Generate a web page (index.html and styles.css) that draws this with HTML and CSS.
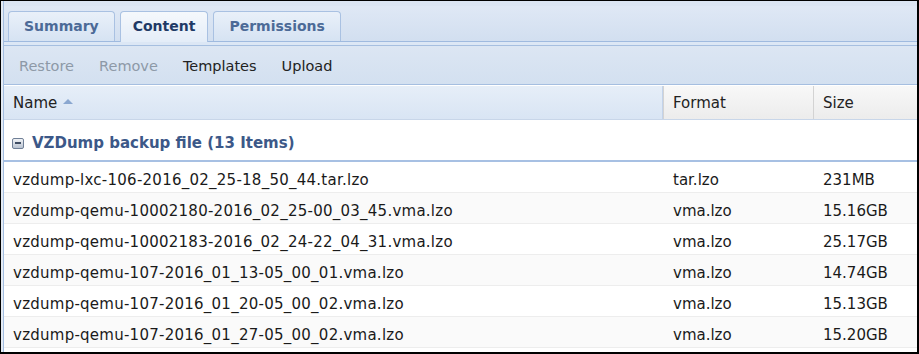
FILE: index.html
```html
<!DOCTYPE html>
<html lang="en">
  <head>
    <meta charset="UTF-8" />
    <title>Storage content</title>
    <link rel="stylesheet" href="styles.css">
  </head>
  <body>
    <div class="frame">
      <div class="panel">
        <div class="tabbar">
          <div class="tab">Summary</div>
          <div class="tab active">Content</div>
          <div class="tab">Permissions</div>
        </div>
        <div class="tabstrip"></div>
        <div class="toolbar">
          <span class="tb-btn disabled">Restore</span>
          <span class="tb-btn disabled">Remove</span>
          <span class="tb-btn">Templates</span>
          <span class="tb-btn">Upload</span>
        </div>
        <div class="grid-head">
          <div class="hcell col-name sorted">Name <span class="sort"></span></div>
          <div class="hcell col-format">Format</div>
          <div class="hcell col-size">Size</div>
        </div>
        <div class="group">
          <span class="collapse"></span>
          VZDump backup file (13 Items)
        </div>
        <div class="rows">
          <div class="row">
            <div class="cell col-name">vzdump-lxc-106-2016_02_25-18_50_44.tar.lzo</div>
            <div class="cell col-format">tar.lzo</div>
            <div class="cell col-size">231MB</div>
          </div>
          <div class="row">
            <div class="cell col-name">vzdump-qemu-10002180-2016_02_25-00_03_45.vma.lzo</div>
            <div class="cell col-format">vma.lzo</div>
            <div class="cell col-size">15.16GB</div>
          </div>
          <div class="row">
            <div class="cell col-name">vzdump-qemu-10002183-2016_02_24-22_04_31.vma.lzo</div>
            <div class="cell col-format">vma.lzo</div>
            <div class="cell col-size">25.17GB</div>
          </div>
          <div class="row">
            <div class="cell col-name">vzdump-qemu-107-2016_01_13-05_00_01.vma.lzo</div>
            <div class="cell col-format">vma.lzo</div>
            <div class="cell col-size">14.74GB</div>
          </div>
          <div class="row">
            <div class="cell col-name">vzdump-qemu-107-2016_01_20-05_00_02.vma.lzo</div>
            <div class="cell col-format">vma.lzo</div>
            <div class="cell col-size">15.13GB</div>
          </div>
          <div class="row">
            <div class="cell col-name">vzdump-qemu-107-2016_01_27-05_00_02.vma.lzo</div>
            <div class="cell col-format">vma.lzo</div>
            <div class="cell col-size">15.20GB</div>
          </div>
        </div>
      </div>
    </div>
  </body>
</html>
```

FILE: styles.css
```css
* {
  margin: 0;
  padding: 0;
  box-sizing: border-box;
}
body {
  background: #fff;
  font-family: "DejaVu Sans", Verdana, sans-serif;
  font-size: 15px;
  color: #1a1a1a;
}
.frame {
  width: 919px;
  height: 354px;
  border: 1px solid #000;
  border-right-width: 2px;
  border-bottom-width: 2px;
  overflow: hidden;
  padding-left: 2px;
  background: #e4ebf4;
}
.panel {
  height: 100%;
  border-left: 1px solid #a3bde0;
  background: #fff;
  overflow: hidden;
}
.tabbar {
  height: 40px;
  display: flex;
  align-items: flex-end;
  gap: 5px;
  padding-left: 4px;
  background: linear-gradient(#dfe8f5, #d2dff0);
  border-top: 5px solid #dbe5f3;
}
.tab {
  height: 30px;
  padding: 0 15px 2px 15px;
  display: flex;
  align-items: center;
  border: 1px solid #a9c1e2;
  border-bottom: 0;
  border-radius: 4px 4px 0 0;
  background: linear-gradient(#e9f0f9, #d6e3f3);
  color: #4c6a97;
  font-size: 14px;
  font-weight: bold;
}
.tab.active {
  background: linear-gradient(#f5f8fc, #e4edf8);
  color: #1f3a66;
  height: 31px;
  margin-bottom: -1px;
  padding: 0 12px 3px 12px;
  position: relative;
}
.tabstrip {
  height: 5px;
  background: #dce7f5;
  border-top: 1px solid #9fbadf;
  border-bottom: 1px solid #a6bfe0;
}
.toolbar {
  height: 39px;
  display: flex;
  align-items: center;
  gap: 23px;
  padding-left: 14px;
  padding-top: 2px;
  background: linear-gradient(#dce6f3, #d3e0f0);
  border-bottom: 1px solid #a5bee0;
  font-size: 14.5px;
}
.tb-btn {
  color: #222;
  padding: 0 1px;
}
.tb-btn.disabled {
  color: #8d99a7;
}
.grid-head {
  height: 34px;
  display: flex;
  border-bottom: 1px solid #c8d6e9;
  margin-top: 1px;
}
.hcell {
  display: flex;
  align-items: center;
  padding-left: 9px;
  background: linear-gradient(#f8f8f8, #ececec);
  border-left: 1px solid #d3d3d3;
  color: #222;
}
.hcell.sorted {
  background: linear-gradient(#e6eef8, #d9e5f4);
  border-left: 0;
  border-right: 1px solid #c3d3ea;
}
.sort {
  width: 0;
  height: 0;
  border-left: 5px solid transparent;
  border-right: 5px solid transparent;
  border-bottom: 5px solid #8aa7d0;
  margin-left: 6px;
  margin-top: -3px;
}
.col-name {
  width: 659px;
}
.col-format {
  width: 150px;
}
.col-size {
  flex: 1;
}
.group {
  height: 42px;
  display: flex;
  align-items: center;
  padding-left: 8px;
  padding-top: 6px;
  gap: 8px;
  color: #3c5888;
  font-weight: bold;
  border-bottom: 2px solid #a7c0e3;
}
.collapse {
  width: 12px;
  height: 11px;
  border: 1px solid #6f7f96;
  border-radius: 2px;
  background: linear-gradient(#f1f3f6, #b9c3d1);
  display: flex;
  align-items: center;
  justify-content: center;
}
.collapse::before {
  content: "";
  width: 6px;
  height: 2px;
  background: #3f4d63;
}
.row {
  height: 31px;
  display: flex;
  border-bottom: 1px solid #ededed;
}
.row:nth-child(even) {
  background: #fafafa;
}
.cell {
  display: flex;
  align-items: center;
  padding-left: 9px;
  padding-top: 5px;
}
.cell.col-name {
  width: 660px;
  letter-spacing: 0.25px;
}
.cell.col-format {
  width: 150px;
}
```
